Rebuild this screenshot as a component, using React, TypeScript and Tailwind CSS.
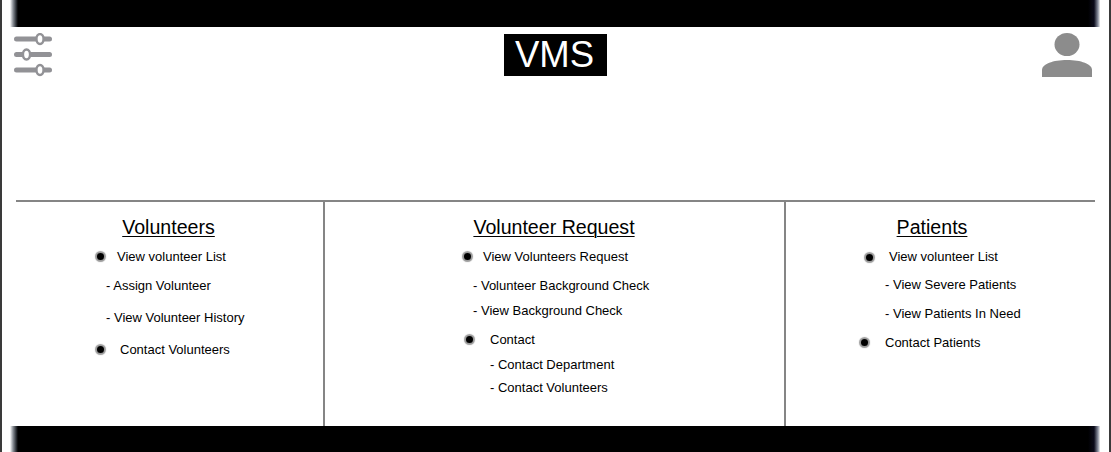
const barFade =
  "h-full mx-[8px] w-[1090px] bg-[linear-gradient(to_right,#ffffff_0px,#8a8f96_3px,#30343a_6px,#000000_8px,#000000_calc(100%-12px),#0a0a1a_calc(100%-6px),#8a90a0_calc(100%-2px),#eeeeee_100%)]";

function Bullet({ className }: { className: string }) {
  return <span className={"absolute w-[7px] h-[7px] rounded-full bg-black shadow-[0_0_1px_2px_rgba(0,0,0,0.4)] " + className} />;
}

function Row({ pad, top, children }: { pad: string; top: string; children: React.ReactNode }) {
  return <div className={"h-[15px] leading-[15px] whitespace-nowrap " + pad + " " + top}>{children}</div>;
}

function Heading({ className, children }: { className?: string; children: React.ReactNode }) {
  return <h2 className={"text-center text-[19.6px] leading-[22px] underline underline-offset-[2px] decoration-1 pt-[14px] h-[37px] " + (className ?? "")}>{children}</h2>;
}

export default function App() {
  return (
    <div className="w-[1111px] h-[452px] overflow-hidden bg-white text-black flex flex-col border-x-2 border-x-[#3a3a3a] font-['Liberation_Sans',Arial,sans-serif] text-[13px] box-border">
      <div className="h-[27px] shrink-0"><div className={barFade} /></div>

      <header className="h-[173px] shrink-0 flex items-start justify-between pl-[12px] pr-[17px] pt-[6px]">
        <svg width="38" height="46" viewBox="0 0 38 46" fill="none" stroke="#929296">
          <g strokeWidth="5" strokeLinecap="round">
            <path d="M2.5 6H35.5" />
            <path d="M2.5 21.5H35.5" />
            <path d="M2.5 37H35.5" />
          </g>
          <g strokeWidth="2.5" fill="#fff">
            <ellipse cx="26" cy="6" rx="3.6" ry="4.9" />
            <ellipse cx="12.5" cy="21.5" rx="3.6" ry="4.9" />
            <ellipse cx="26" cy="37" rx="3.6" ry="4.9" />
          </g>
        </svg>
        <div className="mt-[1px] ml-[17px] pr-[2px] w-[103px] h-[42px] bg-black text-white text-[36.5px] leading-[41px] text-center">VMS</div>
        <svg width="50" height="44" viewBox="0 0 50 44" fill="#8c8c8c">
          <ellipse cx="25" cy="11.5" rx="12.5" ry="11.5" />
          <path d="M0 44V37C0 31 11 27 25 27S50 31 50 37V44Z" />
        </svg>
      </header>

      <main className="flex-1 flex ml-[14px] mr-[14px] border-t-2 border-t-[#858585] min-h-0">
        <section className="w-[309px] border-r-2 border-r-[#858585] relative">
          <Heading className="pr-[2px]">Volunteers</Heading>
          <Row pad="pl-[101px]" top="mt-[10px]">View volunteer List</Row>
          <Row pad="pl-[90px]" top="mt-[14px]">- Assign Volunteer</Row>
          <Row pad="pl-[90px]" top="mt-[17px]">- View Volunteer History</Row>
          <Row pad="pl-[104px]" top="mt-[17px]">Contact Volunteers</Row>
          <Bullet className="left-[81px] top-[51px]" />
          <Bullet className="left-[81px] top-[144px]" />
        </section>
        <section className="w-[461px] border-r-2 border-r-[#858585] relative">
          <Heading className="pr-[1px]">Volunteer Request</Heading>
          <Row pad="pl-[158px]" top="mt-[10px]">View Volunteers Request</Row>
          <Row pad="pl-[148px]" top="mt-[14px]">- Volunteer Background Check</Row>
          <Row pad="pl-[148px]" top="mt-[10px]">- View Background Check</Row>
          <Row pad="pl-[165px]" top="mt-[14px]">Contact</Row>
          <Row pad="pl-[165px]" top="mt-[10px]">- Contact Department</Row>
          <Row pad="pl-[165px]" top="mt-[8px]">- Contact Volunteers</Row>
          <Bullet className="left-[139px] top-[51px]" />
          <Bullet className="left-[141px] top-[134px]" />
        </section>
        <section className="flex-1 relative">
          <Heading className="pr-[17px]">Patients</Heading>
          <Row pad="pl-[103px]" top="mt-[10px]">View volunteer List</Row>
          <Row pad="pl-[99px]" top="mt-[13px]">- View Severe Patients</Row>
          <Row pad="pl-[99px]" top="mt-[14px]">- View Patients In Need</Row>
          <Row pad="pl-[99px]" top="mt-[14px]">Contact Patients</Row>
          <Bullet className="left-[80px] top-[52px]" />
          <Bullet className="left-[75px] top-[137px]" />
        </section>
      </main>

      <div className="h-[26px] shrink-0"><div className={barFade} /></div>
    </div>
  );
}
